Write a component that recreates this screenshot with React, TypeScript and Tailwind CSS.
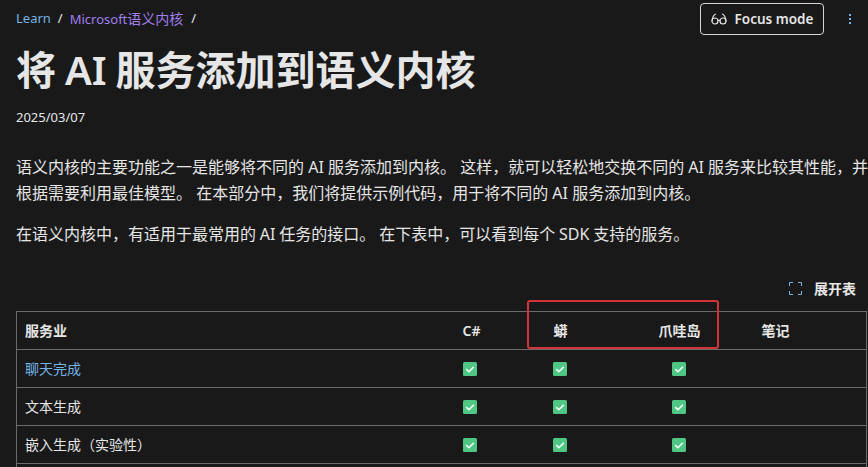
const font = "font-['Noto_Sans','Noto_Sans_CJK_SC',sans-serif]";

function Check() {
  return (
    <svg width="14" height="14" viewBox="0 0 14 14" className="block">
      <rect width="14" height="14" rx="1.5" fill="#4fc683" />
      <path d="M3.2 7.2 L5.9 9.7 L10.8 4.9" fill="none" stroke="#f2fff7" strokeWidth="1.6" />
    </svg>
  );
}

function Glasses() {
  return (
    <svg width="16" height="16" viewBox="0 0 16 16" fill="none" stroke="#e6e6e6" strokeWidth="1.2">
      <circle cx="4" cy="10" r="3" />
      <circle cx="12" cy="10" r="3" />
      <path d="M7 9.5 C7.6 9 8.4 9 9 9.5" />
      <path d="M1 10 C1.4 7 2.6 3.5 5 3" />
      <path d="M15 10 C14.6 7 13.4 3.5 11 3" />
    </svg>
  );
}

function Corners() {
  return (
    <svg width="13" height="13" viewBox="0 0 13 13" fill="none" stroke="#75b6e7" strokeWidth="1" className="mr-[12px]">
      <path d="M0.5 4 V0.5 H4" />
      <path d="M9 0.5 H12.5 V4" />
      <path d="M12.5 9 V12.5 H9" />
      <path d="M4 12.5 H0.5 V9" />
    </svg>
  );
}

const rows = [
  { name: "聊天完成", link: true },
  { name: "文本生成", link: false },
  { name: "嵌入生成（实验性）", link: false },
];

export default function App() {
  return (
    <div className={`${font} relative h-[467px] w-[868px] overflow-hidden bg-[#191919] pl-4 text-[#e6e6e6]`}>
      <div className="flex h-[38px] items-center justify-between pr-[16px]">
        <div className="flex items-center text-[13px]">
          <span className="text-[#75b6e7]">Learn</span>
          <span className="mx-[7px]">/</span>
          <span className="text-[#a27ff0]">Microsoft<span className="text-[14px]">语义内核</span></span>
          <span className="mx-[8px]">/</span>
        </div>
        <div className="flex items-center">
          <div className="flex h-[32px] w-[124px] items-center justify-center gap-[8px] rounded-[4px] border border-[#d6d6d6] text-[13.5px] font-semibold">
            <Glasses />
            <span>Focus mode</span>
          </div>
          <div className="ml-[24px] flex w-[4px] flex-col items-center gap-[2px]">
            <span className="h-[2px] w-[2px] bg-[#75b6e7]" />
            <span className="h-[2px] w-[2px] bg-[#75b6e7]" />
            <span className="h-[2px] w-[2px] bg-[#75b6e7]" />
          </div>
        </div>
      </div>

      <h1 className="mt-[3px] text-[40px] font-semibold leading-[58px] text-[#e6e6e6] [word-spacing:-1.5px]">将 AI 服务添加到语义内核</h1>
      <p className="mt-[8px] text-[13px] leading-[20px]">2025/03/07</p>

      <p className="mt-[27px] w-[868px] text-[16px] leading-[26px]">
        语义内核的主要功能之一是能够将不同的 AI 服务添加到内核。 这样，就可以轻松地交换不同的 AI 服务来比较其性能，并根据需要利用最佳模型。 在本部分中，我们将提供示例代码，用于将不同的 AI 服务添加到内核。
      </p>
      <p className="mt-[15px] text-[16px] leading-[26px] [word-spacing:-0.3px]">
        在语义内核中，有适用于最常用的 AI 任务的接口。 在下表中，可以看到每个 SDK 支持的服务。
      </p>

      <div className="mt-[29px] flex h-[24px] items-center justify-end pr-[12px] text-[14px] font-semibold">
        <Corners />
        <span>展开表</span>
      </div>

      <table className="mt-[11px] w-[851px] table-fixed border-collapse text-[14px]">
        <colgroup>
          <col className="w-[438px]" />
          <col className="w-[91px]" />
          <col className="w-[105px]" />
          <col className="w-[103px]" />
          <col />
        </colgroup>
        <thead>
          <tr className="h-[38px]">
            <th className="border border-r-0 border-[#6b6b6b] px-[8px] text-left font-semibold">服务业</th>
            <th className="border-y border-[#6b6b6b] px-[8px] text-left font-semibold">C#</th>
            <th className="border-y border-[#6b6b6b] pl-[8px] text-left font-semibold">蟒</th>
            <th className="border-y border-[#6b6b6b] pl-[8px] text-left font-semibold">爪哇岛</th>
            <th className="border border-l-0 border-[#6b6b6b] px-[8px] text-left font-semibold" colSpan={2}>笔记</th>
          </tr>
        </thead>
        <tbody>
          {rows.map((r) => (
            <tr key={r.name} className="h-[38px]">
              <td className={`border border-r-0 border-[#6b6b6b] px-[8px] ${r.link ? "text-[#75b6e7]" : ""}`}>{r.name}</td>
              <td className="border-y border-[#6b6b6b] px-[8px]"><Check /></td>
              <td className="border-y border-[#6b6b6b] pl-[7px]"><Check /></td>
              <td className="border-y border-[#6b6b6b] pl-[21px]"><Check /></td>
              <td className="border border-l-0 border-[#6b6b6b] px-[8px]" colSpan={2} />
            </tr>
          ))}
          <tr className="h-[38px]">
            <td className="border border-[#6b6b6b]" colSpan={6} />
          </tr>
        </tbody>
      </table>

      <div className="absolute left-[527px] top-[300px] h-[49px] w-[192px] rounded-[3px] border-2 border-[#d13438]" />
    </div>
  );
}
